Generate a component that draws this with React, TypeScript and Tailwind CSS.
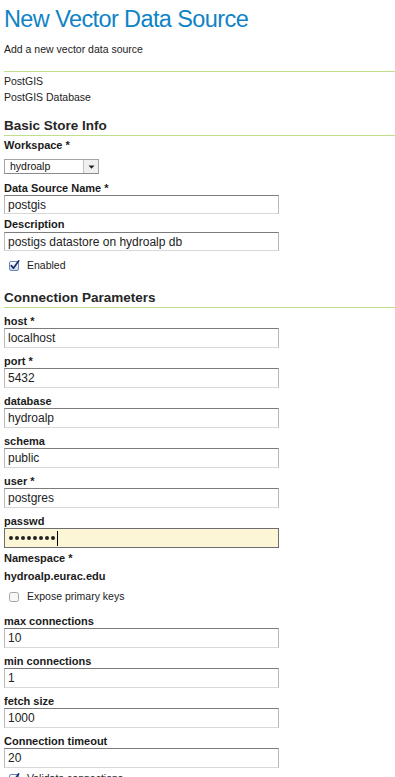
import React from "react";

const Label = ({ children, mt = "mt-[6px]" }: { children: React.ReactNode; mt?: string }) => (
  <div className={`${mt} h-[14px] text-[11px] font-bold leading-[14px] text-[#1a1a1a]`}>{children}</div>
);

const Input = ({ value, h = "h-[20px]", mt = "" }: { value: string; h?: string; mt?: string }) => (
  <div
    className={`${mt} ${h} w-[275px] overflow-hidden border border-[#b8b8b8] border-t-[#7c7c7c] border-b-[#d8d8d8] bg-white pl-[3px] text-[12px] leading-[19px] text-[#222]`}
  >
    {value}
  </div>
);

const Rule = () => <div className="h-[1px] w-full bg-[#bfdf8c]" />;

const CheckOn = () => (
  <svg width="11" height="11" viewBox="0 0 11 11" className="shrink-0">
    <defs>
      <linearGradient id="cb" x1="0" y1="0" x2="0" y2="1">
        <stop offset="0" stopColor="#ffffff" />
        <stop offset="1" stopColor="#c9d6ef" />
      </linearGradient>
    </defs>
    <rect x="0.5" y="1.5" width="9" height="9" rx="1.5" fill="url(#cb)" stroke="#6f86bd" />
    <path d="M2.3 5.6 L4.4 8.2 L9.6 1" stroke="#1b2d6b" strokeWidth="1.7" fill="none" strokeLinecap="round" strokeLinejoin="round" />
  </svg>
);

const CheckOff = () => (
  <svg width="11" height="11" viewBox="0 0 11 11" className="shrink-0">
    <rect x="0.5" y="1.5" width="9" height="9" rx="2" fill="#f7f7f7" stroke="#a5a5a5" />
  </svg>
);

const CheckRow = ({ on, label, mt }: { on: boolean; label: string; mt: string }) => (
  <div className={`${mt} flex h-[14px] items-center gap-[7px] pl-[5px] text-[10.5px] leading-[14px] text-[#222]`}>
    {on ? <CheckOn /> : <CheckOff />}
    <span>{label}</span>
  </div>
);

export default function App() {
  return (
    <div className="min-h-[777px] w-full bg-white pl-[4px] font-['Liberation_Sans',Arial,sans-serif] text-[#222]">
      <h1 className="h-[38px] text-[23.5px] leading-[38px] font-normal tracking-[-0.6px] text-[#1083c5]">
        New Vector Data Source
      </h1>
      <div className="pt-[2px] pb-[13px] text-[10.5px] leading-[18px]">Add a new vector data source</div>
      <Rule />
      <div className="pt-[1px] text-[10.5px] leading-[16px]">
        <div>PostGIS</div>
        <div>PostGIS Database</div>
      </div>

      <div className="mt-[12px] h-[18px] text-[13.5px] font-bold leading-[18px] text-[#262626]">Basic Store Info</div>
      <Rule />
      <div className="h-[18px] text-[11px] font-bold leading-[18px] text-[#1a1a1a]">Workspace *</div>
      <div className="mt-[5px] flex h-[15px] w-[95px] border border-[#a3a3a3] border-b-[#8a8a8a] bg-white">
        <div className="flex-1 pl-[5px] text-[10.5px] leading-[13px] text-[#111]">hydroalp</div>
        <div className="flex w-[15px] items-center justify-center border-l border-[#c2c2c2] bg-[#f0f0f0]">
          <svg width="7" height="4" viewBox="0 0 7 4">
            <path d="M0.5 0.5 L6.5 0.5 L3.5 3.8 Z" fill="#222" />
          </svg>
        </div>
      </div>

      <Label mt="mt-[7px]">Data Source Name *</Label>
      <Input value="postgis" h="h-[19px]" />
      <Label mt="mt-[3px]">Description</Label>
      <Input value="postigs datastore on hydroalp db" h="h-[19px]" mt="mt-[1px]" />
      <CheckRow on label="Enabled" mt="mt-[7px]" />

      <div className="mt-[17px] h-[18px] text-[13.5px] font-bold leading-[18px] text-[#262626]">Connection Parameters</div>
      <Rule />
      <Label>host *</Label>
      <Input value="localhost" />
      <Label>port *</Label>
      <Input value="5432" />
      <Label>database</Label>
      <Input value="hydroalp" />
      <Label>schema</Label>
      <Input value="public" />
      <Label>user *</Label>
      <Input value="postgres" />
      <Label>passwd</Label>
      <div className="flex h-[20px] w-[275px] items-center border border-[#6e6e6e] bg-[#fcf6d6] pl-[4px]">
        <div className="flex gap-[2px]">
          {[0, 1, 2, 3, 4, 5, 6, 7].map((i) => (
            <span key={i} className="block h-[4px] w-[4px] rounded-full bg-[#222]" />
          ))}
        </div>
        <span className="ml-[2px] block h-[15px] w-[1px] bg-black" />
      </div>
      <Label mt="mt-[3px]">Namespace *</Label>
      <Label mt="mt-[4px]">hydroalp.eurac.edu</Label>
      <CheckRow on={false} label="Expose primary keys" mt="mt-[6px]" />

      <Label mt="mt-[11px]">max connections</Label>
      <Input value="10" />
      <Label>min connections</Label>
      <Input value="1" />
      <Label>fetch size</Label>
      <Input value="1000" />
      <Label>Connection timeout</Label>
      <Input value="20" />
      <CheckRow on label="Validate connections" mt="mt-[3px]" />
    </div>
  );
}
